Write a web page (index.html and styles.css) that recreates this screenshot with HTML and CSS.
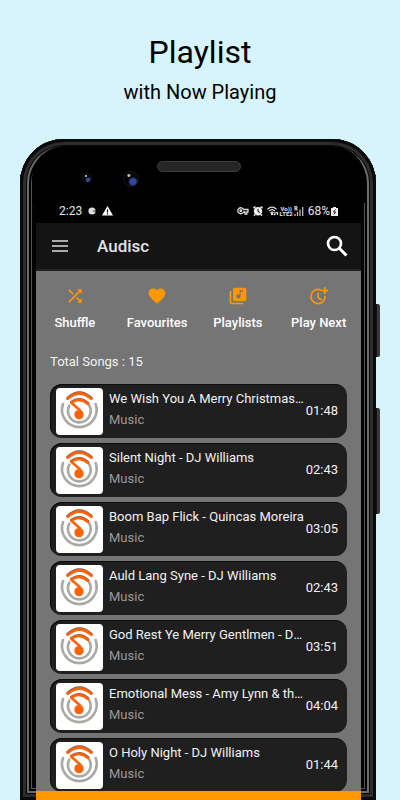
FILE: index.html
```html
<!DOCTYPE html>
<html lang="en">
<head>
<meta charset="utf-8">
<meta name="viewport" content="width=device-width, initial-scale=1">
<title>Playlist</title>
<link rel="stylesheet" href="styles.css">
</head>
<body>
<svg class="defs" aria-hidden="true">
  <symbol id="disc" viewBox="0 0 141 141">
    <g fill="none" stroke-width="8" stroke-linecap="round">
      <path stroke="#aaaaa4" d="M21 48A52 52 0 1 0 119 48M40 53A34 34 0 1 0 100 53"/>
      <path stroke="#6d5560" d="M35 30Q70 -2 106 30M46 42Q72 24 96 46"/>
      <path stroke="#ff6308" d="M35 32Q70 1 106 32M46 44Q72 26 96 48M46 44L72 67V78"/>
    </g>
    <circle cx="69" cy="80" r="14" fill="#ff6308"/>
  </symbol>
</svg>
<header class="intro">
  <h1>Playlist</h1>
  <p>with Now Playing</p>
</header>
<main class="phone">
  <span class="key power"></span>
  <span class="key volume"></span>
  <div class="screen">
    <div class="bezel">
      <span class="speaker"></span>
      <span class="lens small"></span>
      <span class="lens large"></span>
    </div>
    <div class="status">
      <span>2:23</span>
      <svg class="dot" width="8" height="8" viewBox="0 0 8 8"><circle cx="4" cy="4" r="3.600" fill="#ddd"/><path d="M5 4h3" stroke="#333"/></svg>
      <svg width="11" height="10" viewBox="0 0 11 10"><path d="M5.500 0L11 9.500H0z" fill="#fff"/><path d="M5.500 3.500v3M5.500 7.300v1.200" stroke="#000" stroke-width="1.200"/></svg>
      <span class="spacer"></span>
      <svg width="12" height="8" viewBox="0 0 12 8" fill="none" stroke="#ddd" stroke-width="1.300"><path d="M6.500 2.500H11v2.500H9.800V7H8V5H6.500A3 3 0 1 1 6.500 2.500z"/><circle cx="3.800" cy="3.800" r=".8"/></svg>
      <svg width="10" height="10" viewBox="0 0 10 10"><circle cx="5" cy="5.300" r="4.200" fill="#eee"/><path d="M.5 2.200L2.500.6M9.500 2.200L7.500.6M2 8.500L1 9.700M8 8.500L9 9.700" stroke="#eee" stroke-width="1.500"/><path d="M5 3v2.500l1.800 1" fill="none" stroke="#000"/></svg>
      <svg width="12" height="10" viewBox="0 0 12 10" fill="none" stroke="#ddd" stroke-width="1.200"><path d="M.5 3.200Q5 -1 9.500 3.200M2 5Q5 2.200 8 5M3.500 6.800Q5 5.500 6.500 6.800M8 9V6M6.800 7.800L8 9.200M10.500 6v3M9.300 7L10.500 5.800"/><circle cx="5" cy="8" r=".6"/></svg>
      <span class="lte"><span>Vo))</span><span>LTE2</span></span>
      <svg width="10" height="10" viewBox="0 0 10 10" stroke="#ccc" stroke-width="1.200" fill="none"><path d="M1 10V8M3.500 10V6M6 10V3.500M8.700 10V1M1 4.500V.6h1.500q1 1 0 2H1M2.300 2.600L3.500 4.500"/></svg>
      <span>68%</span>
      <svg class="battery" width="7" height="9" viewBox="0 0 7 9"><path d="M2 0h3v1h2v8H0V1h2z" fill="#eee"/><path d="M4.500 2.500L2.500 5h2.200L2.800 7.500" fill="none" stroke="#222"/></svg>
    </div>
    <div class="appbar">
      <button class="menu" aria-label="Menu"><svg width="18" height="12" viewBox="0 0 18 12"><path d="M1 1h16M1 6h16M1 11h16" stroke="#aaa" stroke-width="2"/></svg></button>
      <h2>Audisc</h2>
      <button aria-label="Search"><svg width="22" height="22" viewBox="0 0 22 22" fill="none" stroke="#fff"><circle cx="8.500" cy="8.500" r="6.500" stroke-width="2.600"/><path d="M13 13l7.500 7.500" stroke-width="3"/></svg></button>
    </div>
    <nav class="actions">
      <a href="#shuffle"><svg width="20" height="20" viewBox="0 0 24 24" fill="#ff9800"><path d="M10.590 9.170L5.410 4 4 5.410l5.170 5.170 1.420-1.410zM14.500 4l2.040 2.040L4 18.590 5.410 20 17.960 7.460 20 9.500V4h-5.500zm.33 9.410l-1.410 1.410 3.130 3.130L14.500 20H20v-5.500l-2.040 2.040-3.130-3.130z"/></svg>Shuffle</a>
      <a href="#favourites"><svg width="20" height="20" viewBox="0 0 24 24" fill="#ff9800"><path d="M12 21.350l-1.450-1.320C5.400 15.360 2 12.280 2 8.500 2 5.420 4.420 3 7.500 3c1.740 0 3.410.81 4.500 2.090C13.090 3.810 14.760 3 16.500 3 19.580 3 22 5.420 22 8.500c0 3.780-3.400 6.860-8.550 11.540L12 21.350z"/></svg>Favourites</a>
      <a href="#playlists"><svg width="20" height="20" viewBox="0 0 24 24" fill="#ff9800"><path d="M20 2H8c-1.100 0-2 .9-2 2v12c0 1.100.9 2 2 2h12c1.100 0 2-.9 2-2V4c0-1.100-.9-2-2-2zm-2 5h-3v5.500c0 1.380-1.120 2.500-2.500 2.500S10 13.880 10 12.500s1.120-2.500 2.500-2.500c.57 0 1.080.19 1.500.51V5h4v2zM4 6H2v14c0 1.100.9 2 2 2h14v-2H4V6z"/></svg>Playlists</a>
      <a href="#next"><svg width="20" height="20" viewBox="0 0 24 24" fill="none" stroke="#ff9800" stroke-width="2"><path d="M14.500 5A8.500 8.500 0 1 0 19.300 12M11 8v6l4 2.500M19 1.500v8M15 5.500h8"/></svg>Play Next</a>
    </nav>
    <p class="total">Total Songs : 15</p>
    <ul class="songs">
      <li><svg class="art"><use href="#disc"/></svg><div class="info"><h3>We Wish You A Merry Christmas - Twin Musicom</h3><p>Music</p></div><time>01:48</time></li>
      <li><svg class="art"><use href="#disc"/></svg><div class="info"><h3>Silent Night - DJ Williams</h3><p>Music</p></div><time>02:43</time></li>
      <li><svg class="art"><use href="#disc"/></svg><div class="info"><h3>Boom Bap Flick - Quincas Moreira</h3><p>Music</p></div><time>03:05</time></li>
      <li><svg class="art"><use href="#disc"/></svg><div class="info"><h3>Auld Lang Syne - DJ Williams</h3><p>Music</p></div><time>02:43</time></li>
      <li><svg class="art"><use href="#disc"/></svg><div class="info"><h3>God Rest Ye Merry Gentlmen - DJ Williams</h3><p>Music</p></div><time>03:51</time></li>
      <li><svg class="art"><use href="#disc"/></svg><div class="info"><h3>Emotional Mess - Amy Lynn &amp; the Honey Men</h3><p>Music</p></div><time>04:04</time></li>
      <li><svg class="art"><use href="#disc"/></svg><div class="info"><h3>O Holy Night - DJ Williams</h3><p>Music</p></div><time>01:44</time></li>
    </ul>
    <div class="player"></div>
  </div>
</main>
</body>
</html>
```
FILE: styles.css
```css
* { box-sizing: border-box; margin: 0; }
body {
  height: 100vh;
  display: flex;
  flex-direction: column;
  overflow: hidden;
  background: #d7f3fb;
  color: #000;
  font-family: Roboto, "Liberation Sans", sans-serif;
}
svg { flex: none; }
.defs { position: absolute; width: 0; height: 0; }
.intro { padding: 32px 0 35px; text-align: center; }
.intro h1 { font-size: 32px; line-height: 40px; font-weight: 400; }
.intro p { margin-top: 8px; font-size: 20px; line-height: 24px; }
.phone {
  position: relative;
  flex: 1;
  min-height: 0;
  margin: 0 24px 0 20px;
  padding: 7px 15px 0 16px;
  border-radius: 44px 44px 0 0;
  background: #030303;
  box-shadow: inset 0 0 0 3px #0a0a0a, inset 0 0 0 6px #2d2b2b, inset 0 0 0 7px #070707, inset 0 0 0 9px #6c6c6c, inset 0 0 0 11px #000, inset 0 0 0 12px #555;
}
.key {
  position: absolute;
  left: 100%;
  width: 4px;
  border-left: 1px solid #111;
  border-radius: 0 2px 2px 0;
  background: #39393a;
}
.power { top: 165px; height: 53px; }
.volume { top: 269px; height: 106px; }
.screen { height: 100%; display: flex; flex-direction: column; color: #fff; }
.bezel {
  position: relative;
  flex: none;
  height: 57px;
  margin: 0 -4px;
  padding-top: 15px;
  border-radius: 32px 32px 0 0;
  background: #000;
}
.speaker {
  display: block;
  width: 84px;
  height: 11px;
  margin: 0 auto;
  border: 1px solid #3c3c3c;
  border-radius: 6px;
  background: #262626;
}
.lens { position: absolute; border: 1px solid #15151b; border-radius: 50%; }
.lens.small { left: 50px; top: 27px; width: 10px; height: 10px; background: radial-gradient(circle at 35% 25%, #aaa 0 1px, transparent 1px), radial-gradient(circle at 65% 75%, #34468e 0 2px, #050508 3px); }
.lens.large { left: 91px; top: 25px; width: 16px; height: 16px; background: radial-gradient(circle at 35% 25%, #bbb 0 1px, transparent 2px), radial-gradient(circle at 65% 70%, #3247a0 0 3px, #050508 5px); }
.status {
  flex: none;
  display: flex;
  align-items: center;
  gap: 4px;
  height: 20px;
  padding: 0 23px 4px 23px;
  background: #000;
  color: #e6e6e6;
  font-size: 12px;
  line-height: 16px;
}
.status .dot { margin: 0 2px; }
.status .battery { margin-left: -3px; }
.spacer { flex: 1; }
.lte { display: grid; margin: 0 -3px; font-size: 6px; line-height: 5px; font-weight: 700; text-align: center; }
.appbar {
  flex: none;
  display: flex;
  align-items: center;
  height: 48px;
  padding: 0 13px 0 15px;
  border-bottom: 2px solid #222;
  background: #141414;
}
.appbar button { display: flex; padding: 0; border: 0; background: none; }
.appbar h2 { flex: 1; margin-left: 28px; font-size: 17px; line-height: 24px; font-weight: 500; color: #e2e2e2; }
.actions {
  flex: none;
  display: grid;
  grid-template-columns: repeat(4, 1fr);
  padding: 15px 2px 7px 0;
  background: #757575;
}
.actions a {
  display: flex;
  flex-direction: column;
  align-items: center;
  gap: 9px;
  color: #fff;
  font-size: 13px;
  line-height: 16px;
  font-weight: 500;
  text-decoration: none;
}
.actions a:first-child { margin-left: -3px; }
.total { flex: none; padding: 16px 14px 14px; background: #757575; font-size: 13px; line-height: 16px; color: #f2f2f2; }
.songs {
  flex: 1;
  min-height: 0;
  display: flex;
  flex-direction: column;
  gap: 5px;
  overflow: hidden;
  padding: 0 14px;
  background: #757575;
  list-style: none;
}
.songs li {
  flex: none;
  display: flex;
  align-items: center;
  height: 54px;
  padding: 0 9px 0 6px;
  border-radius: 12px;
  background: #1f1f1f;
  box-shadow: inset 1px 1px 0 #0c0c0c;
}
.art { width: 47px; height: 47px; border-radius: 4px; background: #fff; }
.info { flex: 1; min-width: 0; margin-left: 6px; padding-bottom: 3px; }
.info h3, .info p, time { font-size: 13px; line-height: 16px; font-weight: 400; }
.info h3 { overflow: hidden; white-space: nowrap; text-overflow: ellipsis; color: #f2f2f2; }
.info p { margin-top: 5px; color: #9a9a9a; }
time { margin-left: 1px; color: #f2f2f2; }
.player { flex: none; height: 9px; background: #ff9800; }
```
